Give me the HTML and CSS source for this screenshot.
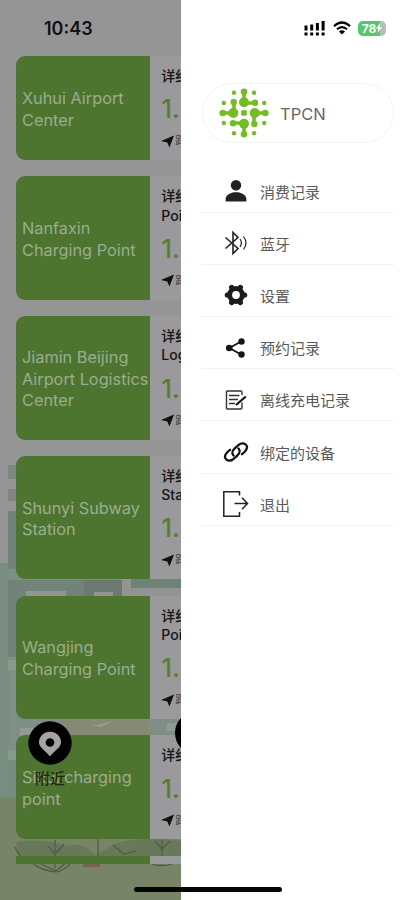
FILE: index.html
```html
<!DOCTYPE html>
<html lang="zh-CN">
<head>
    <meta charset="UTF-8">
    <meta name="viewport" content="width=device-width, initial-scale=1.0">
    <title>TPCN</title>
    <link rel="stylesheet" href="styles.css">
</head>
<body>
    <svg class="icon-defs" width="0" height="0">
        <symbol id="arrow" viewBox="0 0 12 12">
            <path d="M0 5.5 12 .5 7.800 11.500 5.800 7Z"/>
        </symbol>
    </svg>
    <div class="phone">
        <!-- city and park behind the list -->
        <svg class="scene" viewBox="0 0 181 900" width="181" height="900">
            <rect y="563" width="181" height="240" fill="#7d8f86"/>
            <path d="M0 563h9v237H0z" fill="#788c80"/>
            <path d="M8 465h22v14H8zM8 489h22v12H8z" fill="#7d8780"/>
            <path d="M8 511h22v58H8zM8 580h142v77H8z" fill="#71837a"/>
            <path d="M84 580h38v17H84z" fill="#6b7971"/>
            <path d="M26 591h40v6H26zM94 592h19v5H94zM122 579h9v18h-9z" fill="#929693"/>
            <path d="M131 579h50v9h-50z" fill="#6d8375"/>
            <path d="M131 588h50v9h-50z" fill="#929493"/>
            <path d="M8 660h10v10H8zM8 750h10v10H8z" fill="#889a8c"/>
            <path d="M20 728h60v8H20zM167 723h14v8h-14z" fill="#929a94"/>
            <path d="M60 720h88l7 16H62z" fill="#848a74"/>
            <path d="M92 726 115 720 101 727Z" fill="#9b9c80"/>
            <path d="M8 760h9v38H8z" fill="#758c80"/>
            <path d="M0 797h181v103H0z" fill="#778467"/>
            <path d="M16 842q30-4 50 4 12-4 20 2l10 7 20-12q32-8 65-2v22H20z" fill="#68795a"/>
            <g fill="none" stroke="#4e5a47" stroke-width="1.2">
                <path d="M55 840v29M55 855l-7-9M56 853l8-9M98 839v17M162 840v26M162 849l-7-8M162 849l8-8"/>
                <path d="M15 847q3 8 7 10M31 862q10 9 26 10M57 872q9-2 15-11M148 862q10 6 24 2"/>
                <path d="M39 863l17 8 11-9M113 845l11 9 12-3"/>
            </g>
            <path d="M83 864h17v3H83z" fill="#756452"/>
        </svg>

        <div class="stations">
            <div class="station">
                <div class="station-name">Xuhui Airport Center</div>
                <div class="station-info">
                    <p class="detail">详细</p>
                    <p class="price">1.5</p>
                    <p class="distance"><svg><use href="#arrow"/></svg>距离</p>
                </div>
            </div>
            <div class="station tall">
                <div class="station-name">Nanfaxin Charging Point</div>
                <div class="station-info">
                    <p class="detail">详细<br>Point</p>
                    <p class="price">1.5</p>
                    <p class="distance"><svg><use href="#arrow"/></svg>距离</p>
                </div>
            </div>
            <div class="station tall">
                <div class="station-name">Jiamin Beijing Airport Logistics Center</div>
                <div class="station-info">
                    <p class="detail">详细<br>Logis</p>
                    <p class="price">1.5</p>
                    <p class="distance"><svg><use href="#arrow"/></svg>距离</p>
                </div>
            </div>
            <div class="station tall">
                <div class="station-name">Shunyi Subway Station</div>
                <div class="station-info">
                    <p class="detail">详细<br>Station</p>
                    <p class="price">1.5</p>
                    <p class="distance"><svg><use href="#arrow"/></svg>距离</p>
                </div>
            </div>
            <div class="station tall">
                <div class="station-name">Wangjing Charging Point</div>
                <div class="station-info">
                    <p class="detail">详细<br>Point</p>
                    <p class="price">1.5</p>
                    <p class="distance"><svg><use href="#arrow"/></svg>距离</p>
                </div>
            </div>
            <div class="station">
                <div class="station-name">Sihui charging point</div>
                <div class="station-info">
                    <p class="detail">详细</p>
                    <p class="price">1.5</p>
                    <p class="distance"><svg><use href="#arrow"/></svg>距离</p>
                </div>
            </div>
            <div class="station cut">
                <div class="station-name"></div>
                <div class="station-info"></div>
            </div>
        </div>

        <div class="clock">10:43</div>

        <div class="nearby">
            <svg width="44" height="44" viewBox="0 0 44 44">
                <circle cx="22" cy="22" r="21.7" fill="#020202"/>
                <path d="M22 35.5C18 30 11 26.500 11 21.500a11 10.800 0 0 1 22 0C33 26.500 26 30 22 35.500Z" fill="#a5a3a6"/>
                <circle cx="22" cy="21.500" r="4.300" fill="#020202"/>
            </svg>
            <span>附近</span>
        </div>
        <div class="scan"></div>

        <div class="drawer">
            <div class="status">
                <svg width="22" height="15" viewBox="0 0 22 15">
                    <path d="M.5 4.500h3v5h-3zM6.200 3.500h3v6h-3zM11.900 2h3v7.500h-3zM17.600 0h3v9.500h-3zM.5 11.500h3v3h-3zM6.200 11.500h3v3h-3zM11.900 11.500h3v3h-3zM17.600 11.500h3v3h-3z"/>
                </svg>
                <svg width="18" height="14" viewBox="0 0 18 14">
                    <path d="M1 5.200Q9-2.200 17 5.200M4 8.300Q9 3.800 14 8.300" fill="none" stroke="#000" stroke-width="2.200"/>
                    <path d="M9 13.500 5.900 10.400Q9 8 12.100 10.400Z"/>
                </svg>
                <div class="battery">78<svg width="6" height="10" viewBox="0 0 6 10"><path d="M4 0 0 5.800h2.400L1.600 10 6 4H3.500Z" fill="#fff"/></svg></div>
            </div>

            <div class="profile">
                <svg width="50" height="50" viewBox="0 0 50 50" fill="#73bd22" stroke="#73bd22">
                    <g id="arm">
                        <path d="M25 4v11M25 15h12" stroke-width="3.600"/>
                        <circle cx="25" cy="3.700" r="3.300" stroke="none"/>
                        <circle cx="25" cy="14.300" r="5" stroke="none"/>
                        <circle cx="36" cy="14.700" r="3.200" stroke="none"/>
                        <circle cx="15" cy="4.800" r="2.200" stroke="none"/>
                        <circle cx="35" cy="4.800" r="2.200" stroke="none"/>
                    </g>
                    <use href="#arm" transform="rotate(90 25 25)"/>
                    <use href="#arm" transform="rotate(180 25 25)"/>
                    <use href="#arm" transform="rotate(270 25 25)"/>
                    <rect x="22.200" y="22.200" width="5.600" height="5.600" rx="1" stroke="none"/>
                </svg>
                <span>TPCN</span>
            </div>

            <div class="menu">
                <div class="menu-item">
                    <svg viewBox="0 0 26 26">
                        <circle cx="13" cy="7.200" r="5.200" fill="#222"/>
                        <path d="M2.700 23.500v-3.200C3.500 16 9 14.300 13 14.300s9.500 1.700 10.300 6v3.200Z" fill="#222"/>
                    </svg>
                    <span>消费记录</span>
                </div>
                <div class="menu-item">
                    <svg viewBox="0 0 26 26" fill="none" stroke="#222" stroke-width="1.600">
                        <path d="M2.500 7.500 15 18.500 10 23.500V2.500L15 7.500 2.500 18.500"/>
                        <path d="M17 9q2.800 4 0 8M20.500 6.500q5 6.500 0 13" stroke-width="1.200"/>
                    </svg>
                    <span>蓝牙</span>
                </div>
                <div class="menu-item">
                    <svg viewBox="0 0 26 26" fill="none" stroke="#1c1c1c">
                        <circle cx="13" cy="13" r="6.400" stroke-width="5"/>
                        <path d="M21.700 13h-.6M4.300 13h.6M17.400 5.400l-.3.500M8.600 20.600l.3-.5M8.600 5.400l.3.500M17.400 20.600l-.3-.5" stroke-width="5.200" stroke-linecap="round"/>
                    </svg>
                    <span>设置</span>
                </div>
                <div class="menu-item">
                    <svg viewBox="0 0 26 26" fill="#151515">
                        <path d="M18 6.500 6.500 13 18 19.500" fill="none" stroke="#151515" stroke-width="1.800"/>
                        <circle cx="18.500" cy="6.500" r="3.200"/>
                        <circle cx="6.200" cy="13" r="3.300"/>
                        <circle cx="18.500" cy="19.500" r="3.200"/>
                    </svg>
                    <span>预约记录</span>
                </div>
                <div class="menu-item">
                    <svg viewBox="0 0 26 26" fill="none" stroke="#333" stroke-width="1.400">
                        <path d="M19 8V5.500q0-1.500-1.500-1.500H4.500Q3 4 3.500 6.500v13Q3 22 4.500 22h13q1.500 0 1.500-2v-4.500M6 8.500h10.500M6 12.500h9M6 16.500h6"/>
                        <path d="M22.800 9.500 13 18" stroke="#111" stroke-width="2.200"/>
                    </svg>
                    <span>离线充电记录</span>
                </div>
                <div class="menu-item">
                    <svg viewBox="0 0 26 26" fill="none" stroke="#111" stroke-width="2.300" stroke-linecap="round">
                        <path d="M10.500 16.500C8 13.500 9.500 11.500 12 9.200L15.500 6C18.500 3.500 22 4 23.500 6.500S23.500 11 21.500 13L19 15.200"/>
                        <path d="M15.500 9.500C18 12.500 16.500 14.500 14 16.800L10.500 20C7.500 22.500 4 22 2.500 19.500S2.500 15 4.500 13L7 10.800"/>
                    </svg>
                    <span>绑定的设备</span>
                </div>
                <div class="menu-item">
                    <svg viewBox="0 0 26 26" fill="none" stroke="#222" stroke-width="1.500">
                        <path d="M16.500 4.500V.8H.8v24.400h15.700V21M11.500 12.500h12.500M19 6.800l5.500 5.700-5.500 5.700"/>
                    </svg>
                    <span>退出</span>
                </div>
            </div>
        </div>
        <div class="home-bar"></div>
    </div>
</body>
</html>
```

FILE: styles.css
```css
* {
    box-sizing: border-box;
}
body {
    margin: 0;
    font-family: Inter, "Noto Sans CJK SC", sans-serif;
}
p {
    margin: 0;
}
.icon-defs {
    position: absolute;
}
.phone {
    position: relative;
    width: 415px;
    height: 900px;
    overflow: hidden;
    background-color: #959595;
}
.scene {
    position: absolute;
    top: 0;
    left: 0;
}
.clock {
    position: absolute;
    top: 18px;
    left: 44px;
    font-size: 18px;
    line-height: 22px;
    font-weight: 600;
    color: #111;
}

/* station list */
.stations {
    position: relative;
    display: flex;
    flex-direction: column;
    gap: 16.300px;
    padding: 56px 0 0 16px;
}
.station {
    display: flex;
    height: 104px;
    border-radius: 9px 0 0 9px;
    overflow: hidden;
}
.station.tall {
    height: 123.500px;
}
.station.cut {
    height: 8px;
    border-radius: 0;
}
.station-name {
    display: flex;
    align-items: center;
    width: 134.300px;
    padding: 3px 0 0 6px;
    font-size: 16.300px;
    line-height: 21.500px;
    color: #9aad91;
    background-color: #4e752f;
}
.station-info {
    flex: 1;
    padding: 10px 0 0 11px;
    background-color: #9a999b;
}
.detail {
    font-size: 14px;
    line-height: 19.300px;
    font-weight: 500;
    color: #151515;
}
.price {
    font-size: 26px;
    line-height: 30px;
    margin-top: 9px;
    font-weight: 500;
    color: #54812f;
}
.distance {
    display: flex;
    align-items: center;
    gap: 1px;
    margin-top: 9px;
    font-size: 12px;
    line-height: 16px;
    color: #444;
}
.distance svg {
    width: 13px;
    height: 13px;
    fill: #101010;
}

/* floating buttons */
.nearby {
    position: absolute;
    top: 721px;
    left: 28px;
    width: 44px;
    text-align: center;
    font-size: 15px;
    line-height: 20px;
    font-weight: 500;
    color: #1a2813;
}
.nearby svg {
    display: block;
    margin-bottom: 4px;
}
.scan {
    position: absolute;
    top: 711px;
    left: 175px;
    width: 44px;
    height: 44px;
    border-radius: 50%;
    background-color: #020202;
}

/* side menu */
.drawer {
    position: absolute;
    top: 0;
    right: 0;
    width: 234px;
    height: 900px;
    padding: 20px 21px 0;
    background-color: #fff;
}
.status {
    display: flex;
    align-items: center;
    justify-content: flex-end;
    gap: 7px;
    height: 16px;
    margin-right: 8px;
}
.battery {
    display: flex;
    align-items: center;
    justify-content: center;
    width: 28px;
    height: 15px;
    border-radius: 5px;
    background: linear-gradient(90deg, #4fc96a 78%, #bbb 78%);
    color: #fff;
    font-size: 12px;
    font-weight: 700;
}
.profile {
    display: flex;
    align-items: center;
    gap: 11px;
    height: 60px;
    margin-top: 47px;
    padding-left: 16px;
    border: 1.500px solid #f3f3f3;
    border-radius: 30px;
    font-size: 16.500px;
    color: #666;
}
.profile span {
    padding-top: 2px;
}
.menu {
    margin-top: 17.500px;
}
.menu-item {
    display: flex;
    align-items: center;
    gap: 11px;
    height: 52.200px;
    padding: 10px 0 0 21px;
    border-bottom: 1.500px solid #f2f2f2;
    font-size: 15px;
    color: #5a5a5a;
}
.menu-item svg {
    width: 26px;
    height: 26px;
}
.home-bar {
    position: absolute;
    left: 134px;
    bottom: 8px;
    width: 148px;
    height: 5px;
    border-radius: 3px;
    background-color: #050505;
}
```
